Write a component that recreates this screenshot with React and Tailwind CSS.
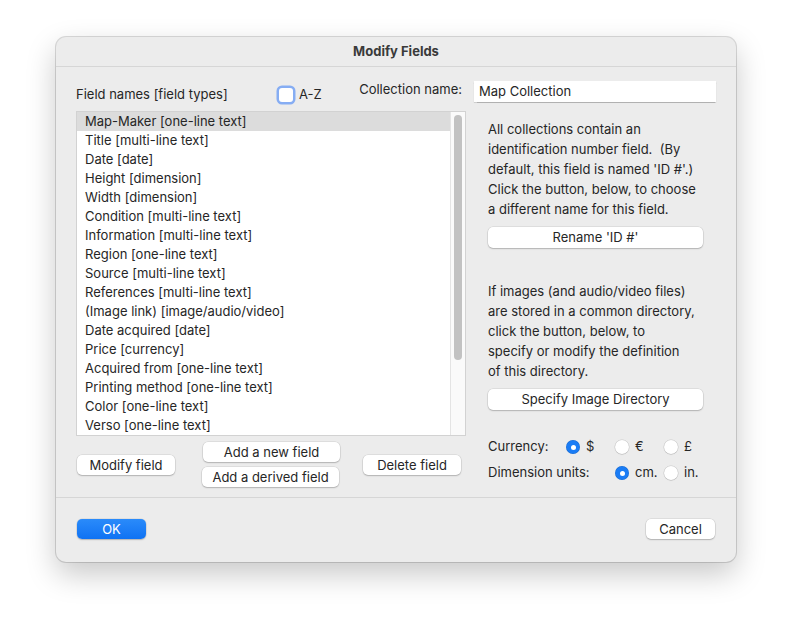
import React from "react";

const fields = [
  "Map-Maker [one-line text]",
  "Title [multi-line text]",
  "Date [date]",
  "Height [dimension]",
  "Width [dimension]",
  "Condition [multi-line text]",
  "Information [multi-line text]",
  "Region [one-line text]",
  "Source [multi-line text]",
  "References [multi-line text]",
  "(Image link) [image/audio/video]",
  "Date acquired [date]",
  "Price [currency]",
  "Acquired from [one-line text]",
  "Printing method [one-line text]",
  "Color [one-line text]",
  "Verso [one-line text]",
];

const Button = ({ children, className = "" }) => (
  <button
    className={
      "h-[20px] rounded-[5px] bg-white text-[13px] leading-[20px] text-[#262626] shadow-[0_0_0_0.5px_rgba(0,0,0,0.12),0_1px_1.5px_rgba(0,0,0,0.2)] " +
      className
    }
  >
    {children}
  </button>
);

const Radio = ({ checked }) =>
  checked ? (
    <span className="flex h-[14px] w-[14px] shrink-0 items-center justify-center rounded-full bg-[#1a7cf5] shadow-[inset_0_0_0_0.5px_rgba(0,0,0,0.15)]">
      <span className="h-[5px] w-[5px] rounded-full bg-white" />
    </span>
  ) : (
    <span className="h-[14px] w-[14px] shrink-0 rounded-full bg-white shadow-[0_0_0_0.5px_rgba(0,0,0,0.15),0_0.5px_1px_rgba(0,0,0,0.15)]" />
  );

const Option = ({ checked, label }) => (
  <div className="flex w-[49px] shrink-0 items-center gap-[6px]">
    <Radio checked={checked} />
    <span>{label}</span>
  </div>
);

export default function App() {
  return (
    <div
      className="h-[636px] w-[792px] bg-white pl-[56px] pt-[37px] text-[13px] text-[#262626]"
      style={{ fontFamily: "Inter, 'Noto Sans', sans-serif" }}
    >
      <div className="flex h-[525px] w-[680px] flex-col overflow-hidden rounded-[10px] bg-[#ececec] shadow-[0_0_0_1px_rgba(0,0,0,0.14),0_12px_30px_rgba(0,0,0,0.22)]">
        {/* title bar */}
        <div className="flex h-[30px] shrink-0 items-center justify-center border-b border-[#d6d6d6] text-[13px] font-bold text-[#3a3a3a]">
          Modify Fields
        </div>

        <div className="flex flex-col px-[20px] pt-[14px]">
          {/* top row */}
          <div className="flex h-[21px] items-center">
            <div className="flex translate-y-[3px] items-center">
              <span className="w-[203px]">Field names [field types]</span>
              <span className="h-[14px] w-[14px] rounded-[3px] bg-white shadow-[0_0_0_2.5px_#86adf3]" />
              <span className="ml-[6px]">A-Z</span>
            </div>
            <span className="ml-auto mr-[12px] -translate-y-[2px]">Collection name:</span>
            <div className="flex h-[21px] w-[242px] items-center bg-white pl-[5px] shadow-[0_0.5px_1px_rgba(0,0,0,0.25)]">
              Map Collection
            </div>
          </div>

          <div className="mt-[9px] flex">
            {/* left column */}
            <div className="flex w-[390px] shrink-0 flex-col">
              <div className="flex h-[325px] border border-[#d2d2d2] bg-white">
                <div className="flex flex-1 flex-col">
                  {fields.map((f, i) => (
                    <div
                      key={i}
                      className={
                        "h-[19px] pl-[8px] leading-[19px] " +
                        (i === 0 ? "bg-[#dcdcdc]" : "")
                      }
                    >
                      {f}
                    </div>
                  ))}
                </div>
                <div className="flex w-[15px] justify-center border-l border-[#e4e4e4] bg-[#fafafa] pt-[3px]">
                  <div className="h-[245px] w-[8px] rounded-full bg-[#c2c2c2]" />
                </div>
              </div>

              <div className="mt-[6px] flex items-center pl-[1px]">
                <Button className="w-[98px]">Modify field</Button>
                <div className="ml-[27px] flex flex-col gap-[5px]">
                  <Button className="ml-[1px] w-[137px]">Add a new field</Button>
                  <Button className="w-[137px]">Add a derived field</Button>
                </div>
                <Button className="ml-[23px] w-[98px]">Delete field</Button>
              </div>
            </div>

            {/* right column */}
            <div className="ml-[22px] flex w-[216px] shrink-0 flex-col pt-[8px]">
              <p className="leading-[20px]">
                All collections contain an
                <br />
                identification number field.&nbsp; (By
                <br />
                default, this field is named 'ID #'.)
                <br />
                Click the button, below, to choose
                <br />
                a different name for this field.
              </p>
              <Button className="mt-[8px] h-[21px] w-[215px] leading-[21px]">Rename 'ID #'</Button>

              <p className="mt-[33px] leading-[20px]">
                If images (and audio/video files)
                <br />
                are stored in a common directory,
                <br />
                click the button, below, to
                <br />
                specify or modify the definition
                <br />
                of this directory.
              </p>
              <Button className="mt-[8px] h-[21px] w-[215px] leading-[21px]">Specify Image Directory</Button>

              <div className="mt-[27px] flex h-[20px] items-center">
                <span className="w-[78px] shrink-0">Currency:</span>
                <Option checked label="$" />
                <Option label="€" />
                <Option label="£" />
              </div>
              <div className="mt-[6px] flex h-[20px] items-center">
                <span className="w-[127px] shrink-0">Dimension units:</span>
                <Option checked label="cm." />
                <Option label="in." />
              </div>
            </div>
          </div>
        </div>

        {/* footer */}
        <div className="mt-[10px] border-t border-[#d6d6d6]" />
        <div className="flex px-[21px] pt-[21px]">
          <button className="h-[20px] w-[69px] rounded-[5px] bg-gradient-to-b from-[#2a8bfa] to-[#0f72f3] text-[13px] leading-[20px] text-white shadow-[0_0_0_0.5px_rgba(0,0,0,0.1),0_1px_1.5px_rgba(0,0,0,0.2)]">
            OK
          </button>
          <Button className="ml-auto w-[69px]">Cancel</Button>
        </div>
      </div>
    </div>
  );
}
